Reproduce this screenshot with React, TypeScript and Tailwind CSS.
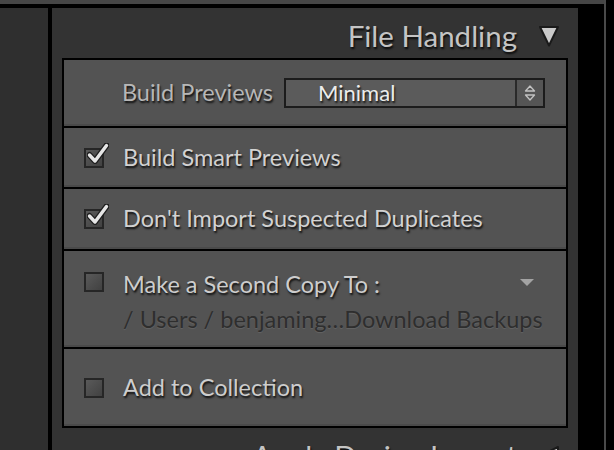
import type { ReactNode } from "react"

const shadow = "[text-shadow:1px_2px_2px_rgba(0,0,0,0.85)]"

function CheckBox({ checked }: { checked?: boolean }) {
  return (
    <div className="relative h-5 w-5 shrink-0">
      <div className="h-5 w-5 border-2 border-[#262626] bg-[linear-gradient(135deg,#5a5a5a,#414141)]" />
      {checked && (
        <svg
          className="absolute -top-[5px] left-[3px] h-[21px] w-[22px]"
          viewBox="0 0 22 21"
          aria-hidden
        >
          <path
            d="M2.5 12 L8 18 L19.5 2.5"
            fill="none"
            stroke="#1e1e1e"
            strokeWidth="6"
            strokeLinecap="round"
            strokeLinejoin="round"
          />
          <path
            d="M2.5 12 L8 18 L19.5 2.5"
            fill="none"
            stroke="#e6e6e6"
            strokeWidth="3.4"
            strokeLinecap="round"
            strokeLinejoin="round"
          />
        </svg>
      )}
    </div>
  )
}

function Row({ h, children, className = "" }: { h: string; children: ReactNode; className?: string }) {
  return (
    <div className={`flex bg-[#535353] shadow-[inset_0_-2px_0_#4a4a4a] ${h} ${className}`}>
      {children}
    </div>
  )
}

function Header({ title, open }: { title: string; open?: boolean }) {
  return (
    <div className="flex h-[50px] shrink-0 items-center justify-end gap-[21px] pr-[18px] pt-[5px]">
      <span className={`whitespace-nowrap text-[29.5px] leading-none text-[#c4c4c4] ${shadow}`}>{title}</span>
      <svg className="h-[22px] w-[22px] shrink-0" viewBox="0 0 22 22" aria-hidden>
        {open ? (
          <path d="M2 2 L20 2 L11 20.5 Z" fill="#cacaca" stroke="#1a1a1a" strokeWidth="2" strokeLinejoin="round" />
        ) : (
          <path d="M20 2 L20 20 L2 11 Z" fill="#cacaca" stroke="#1a1a1a" strokeWidth="2" strokeLinejoin="round" />
        )}
      </svg>
    </div>
  )
}

export default function App() {
  return (
    <div className="flex h-[450px] w-[614px] overflow-hidden bg-black font-['Lato',sans-serif]">
      <div className="flex w-[604px] flex-col">
        <div className="h-1 shrink-0 bg-[#464646]" />
        <div className="h-1 shrink-0 bg-black" />
        <div className="flex min-h-0 flex-1">
          <div className="w-12 bg-[#2f2f2f]" />
          <div className="w-1 bg-black" />
          <div className="flex w-[526px] flex-col bg-[#333333]">
            <Header title="File Handling" open />

            <div className="mx-[10px] flex shrink-0 flex-col gap-[2px] border-2 border-black bg-black">
              <Row h="h-[66px]" className="items-center">
                <span className={`w-[209px] text-right text-[23.5px] text-[#b7b7b7] ${shadow}`}>
                  Build Previews
                </span>
                <div className="ml-[11px] flex h-[30px] w-[261px] border-2 border-[#1c1c1c] bg-[#5b5b5b]">
                  <span className={`flex-1 pl-[32px] text-[22px] leading-[26px] text-[#ececec] ${shadow}`}>
                    Minimal
                  </span>
                  <div className="flex w-[28px] items-center justify-center border-l-2 border-[#2a2a2a] bg-[#555555]">
                    <svg className="h-[20px] w-[12px]" viewBox="0 0 12 20" aria-hidden>
                      <path d="M1.5 8 L6 3 L10.5 8 Z" fill="none" stroke="#c2c2c2" strokeWidth="1.3" strokeLinejoin="round" />
                      <path d="M1.5 12 L6 17 L10.5 12 Z" fill="none" stroke="#c2c2c2" strokeWidth="1.3" strokeLinejoin="round" />
                    </svg>
                  </div>
                </div>
              </Row>

              <Row h="h-[59px]" className="items-center gap-[19px] pl-[20px]">
                <CheckBox checked />
                <span className={`text-[23.5px] text-[#d2d2d2] ${shadow}`}>Build Smart Previews</span>
              </Row>

              <Row h="h-[60px]" className="items-center gap-[19px] pl-[20px]">
                <CheckBox checked />
                <span className={`text-[23.5px] text-[#d2d2d2] ${shadow}`}>Don't Import Suspected Duplicates</span>
              </Row>

              <Row h="h-[96px]" className="items-start pl-[20px] pt-[21px]">
                <CheckBox />
                <div className="ml-[19px] flex min-w-0 flex-1 flex-col">
                  <div className="flex h-6 items-start justify-between">
                    <span className={`whitespace-nowrap text-[23.5px] leading-6 text-[#cdcdcd] ${shadow}`}>
                      Make a Second Copy To :
                    </span>
                    <svg className="mr-[32px] mt-[7px] h-[8px] w-[14px] shrink-0" viewBox="0 0 14 8" aria-hidden>
                      <path d="M0 0 L14 0 L7 7 Z" fill="#a3a3a3" />
                    </svg>
                  </div>
                  <span className="mt-[11px] h-6 whitespace-nowrap text-[23.5px] leading-6 text-[#2e2e2e] [text-shadow:0_1px_1px_rgba(255,255,255,0.1)]">
                    / Users / benjaming…Download Backups
                  </span>
                </div>
              </Row>

              <Row h="h-[77px]" className="items-center gap-[19px] pl-[20px]">
                <CheckBox />
                <span className={`text-[23.5px] text-[#cdcdcd] ${shadow}`}>Add to Collection</span>
              </Row>
            </div>

            <Header title="Apply During Import" />
          </div>
        </div>
      </div>
      <div className="w-[2px] bg-[#4a4a4a]" />
    </div>
  )
}
